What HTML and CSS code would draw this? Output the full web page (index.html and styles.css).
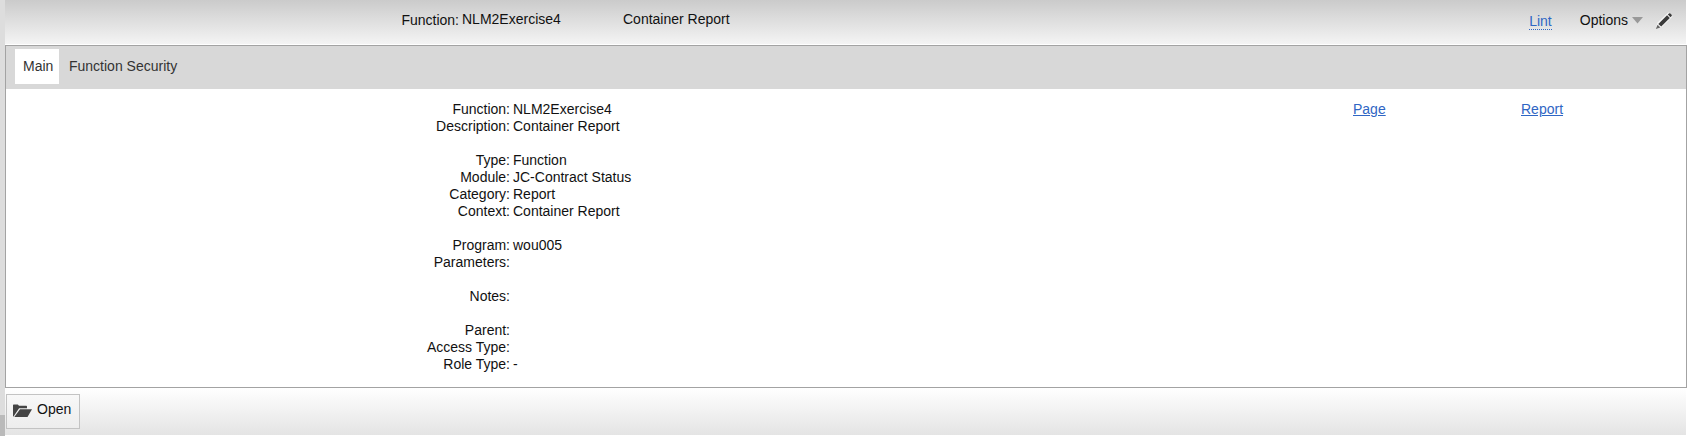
FILE: index.html
```html
<!DOCTYPE html>
<html lang="en">
<head>
<meta charset="utf-8">
<title>Function: NLM2Exercise4</title>
<link rel="stylesheet" href="styles.css">
</head>
<body>
<div class="app">
  <div class="rail"><div class="rail-thumb"></div></div>
  <div class="content">
    <header class="header">
      <span class="header-label">Function:</span>
      <span class="header-name">NLM2Exercise4</span>
      <span class="header-desc">Container Report</span>
      <a class="lint">Lint</a>
      <span class="options">Options</span>
      <svg class="caret" width="11" height="7" viewBox="0 0 11 7"><path d="M0 0h11L5.5 6.5z" fill="#999"/></svg>
      <svg class="pencil" width="18" height="18" viewBox="0 0 18 18"><path d="M13.5 .2L2.6 10.6l-2 6.4 6.4-2L17.6 4.6z" fill="#fff" opacity=".75"/><path d="M3.3 11.9L12.1 3.2 14.8 5.9 6.2 14.6z" fill="#3b3b3b"/><path d="M12.8 2.5l1.2-1.1q.7-.5 1.3 0l1.3 1.3q.5.6 0 1.2l-1.1 1.3z" fill="#3b3b3b"/><path d="M2.6 12.8l2.8 2.6L.8 17z" fill="#666"/></svg>
    </header>
    <main class="panel">
      <nav class="tabs">
        <a class="tab active">Main</a>
        <a class="tab">Function Security</a>
      </nav>
      <div class="body">
        <dl class="fields">
          <dt>Function:</dt><dd>NLM2Exercise4</dd>
          <dt>Description:</dt><dd>Container Report</dd>
          <dt class="gap">Type:</dt><dd class="gap">Function</dd>
          <dt>Module:</dt><dd>JC-Contract Status</dd>
          <dt>Category:</dt><dd>Report</dd>
          <dt>Context:</dt><dd>Container Report</dd>
          <dt class="gap">Program:</dt><dd class="gap">wou005</dd>
          <dt>Parameters:</dt><dd></dd>
          <dt class="gap">Notes:</dt><dd class="gap"></dd>
          <dt class="gap">Parent:</dt><dd class="gap"></dd>
          <dt>Access Type:</dt><dd></dd>
          <dt>Role Type:</dt><dd>-</dd>
        </dl>
        <div class="links"><a>Page</a><a>Report</a></div>
      </div>
    </main>
    <footer class="footer">
      <button class="open" type="button">
        <svg width="20" height="14" viewBox="0 0 20 14"><path d="M0 12.4V1.2Q0 .5.7.5H4.8L6 1.8h7.3q.7 0 .7.7v1.8H6.1L.5 12.4z" fill="#444"/><path d="M7 5.3h12L14.5 13H1.3z" fill="#444"/></svg>
        <span>Open</span>
      </button>
    </footer>
  </div>
</div>
</body>
</html>
```
FILE: styles.css
```css
* { box-sizing: border-box; }
body {
  margin: 0;
  background: #fff;
  color: #111;
  font: 14px/17px "Liberation Sans", Arial, sans-serif;
  overflow: hidden;
}
.app { display: flex; height: 436px; }
.rail {
  width: 5px;
  background: #ddd;
  display: flex;
  flex-direction: column;
  justify-content: flex-end;
}
.rail-thumb { height: 21px; background: #bababa; }
.content { flex: 1; display: flex; flex-direction: column; }
.header {
  height: 44px;
  margin: 0 1px 1px 0;
  display: flex;
  align-items: flex-start;
  background: linear-gradient(#cbcbcb, #f4f4f4);
}
.header-label { width: 454px; padding-top: 12px; text-align: right; }
.header-name { width: 161px; margin-left: 3px; padding-top: 11px; }
.header-desc { padding-top: 11px; }
.lint {
  margin: 13px 28px 0 auto;
  line-height: 16px;
  color: #2f66c4;
  border-bottom: 1px dotted #2f66c4;
}
.options { padding-top: 12px; margin-right: 4px; }
.caret { margin: 17px 12px 0 0; }
.pencil { margin: 12px 13px 0 0; }
.panel { height: 343px; border: 1px solid #a3a3a3; }
.tabs {
  height: 43px;
  padding: 3px 0 0 9px;
  display: flex;
  align-items: flex-start;
  background: #d8d8d8;
}
.tab { height: 35px; padding: 9px 8px 0; color: #333; }
.tab + .tab { padding-left: 10px; }
.tab.active { width: 44px; background: #fff; }
.body { display: flex; padding-top: 12px; }
.fields {
  width: 1347px;
  margin: 0;
  display: grid;
  grid-template-columns: 504px 1fr;
  column-gap: 3px;
}
.fields dt { text-align: right; }
.fields dd { margin: 0; min-height: 17px; }
.fields .gap { margin-top: 17px; }
.links { display: grid; grid-template-columns: 168px auto; align-items: start; }
.links a { color: #2f66c4; text-decoration: underline; }
.footer {
  height: 47px;
  margin-right: 1px;
  padding: 6px 0 0 1px;
  background: linear-gradient(#fff, #e4e4e4);
}
.open {
  width: 74px;
  height: 35px;
  padding: 0 0 0 6px;
  display: flex;
  align-items: flex-start;
  gap: 4px;
  border: 1px solid #c3c3c3;
  background: linear-gradient(#f8f8f8, #ededed);
  color: #111;
  font: inherit;
}
.open svg { margin-top: 9px; }
.open span { margin-top: 6px; }
```
